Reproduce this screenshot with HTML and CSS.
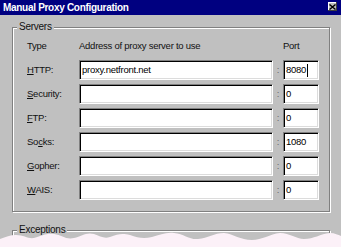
FILE: index.html
```html
<!DOCTYPE html>
<html lang="en">
<head>
  <meta charset="UTF-8">
  <title>Manual Proxy Configuration</title>
  <link rel="stylesheet" href="styles.css">
</head>
<body>
  <div class="window">
    <div class="titlebar">
      <span class="title">Manual Proxy Configuration</span>
      <span class="close">
        <svg width="7" height="6" viewBox="0 0 7 6"><path d="M0.5 0.5 L6.5 5.5 M6.5 0.5 L0.5 5.5" stroke="#000" stroke-width="1.4"/></svg>
      </span>
    </div>

    <fieldset class="group servers">
      <legend>Servers</legend>
      <div class="grid">
        <div class="head">Type</div>
        <div class="head">Address of proxy server to use</div>
        <div></div>
        <div class="head">Port</div>

        <div class="label"><u>H</u>TTP:</div>
        <div class="field">proxy.netfront.net</div>
        <div class="colon">:</div>
        <div class="field">8080<span class="caret"></span></div>

        <div class="label"><u>S</u>ecurity:</div>
        <div class="field"></div>
        <div class="colon">:</div>
        <div class="field">0</div>

        <div class="label"><u>F</u>TP:</div>
        <div class="field"></div>
        <div class="colon">:</div>
        <div class="field">0</div>

        <div class="label">So<u>c</u>ks:</div>
        <div class="field"></div>
        <div class="colon">:</div>
        <div class="field">1080</div>

        <div class="label"><u>G</u>opher:</div>
        <div class="field"></div>
        <div class="colon">:</div>
        <div class="field">0</div>

        <div class="label"><u>W</u>AIS:</div>
        <div class="field"></div>
        <div class="colon">:</div>
        <div class="field">0</div>
      </div>
    </fieldset>

    <fieldset class="group exceptions">
      <legend>Exceptions</legend>
    </fieldset>

    <!-- torn paper edge -->
    <svg class="torn" width="341" height="20" viewBox="0 0 341 20">
      <path d="M0 9 C6 7 10 5 16 5 C24 5 28 9 34 8 C42 6 46 3 54 4 C62 5 66 10 74 8 C82 6 86 2 94 4 C100 6 104 9 110 7 C118 4 122 3 130 5 C138 8 144 9 152 7 C160 5 166 2 174 3 C184 4 190 10 198 9 C208 8 214 3 224 3 C234 4 240 10 252 10 C262 10 270 4 280 3 C290 3 296 9 304 9 C314 9 320 4 330 3 C335 3 338 5 341 6 L341 20 L0 20 Z" fill="#fcf1f8"/>
    </svg>
  </div>
</body>
</html>
```

FILE: styles.css
```css
/* Reset Styles */
* {
  margin: 0;
  padding: 0;
  box-sizing: border-box;
}

body {
  font-family: 'Liberation Sans', Arial, sans-serif;
  font-size: 9.5px;
  letter-spacing: -0.25px;
  background-color: #c0c0c0;
  color: #111;
}

.window {
  position: relative;
  width: 341px;
  height: 247px;
  overflow: hidden;
  background-color: #c0c0c0;
}

.titlebar {
  height: 15px;
  background-color: #000080;
  color: white;
  display: flex;
  align-items: center;
  justify-content: space-between;
  padding: 0 4px 0 3px;
}

.title {
  font-size: 10px;
  font-weight: bold;
  letter-spacing: -0.3px;
}

.close {
  width: 9px;
  height: 9px;
  margin-top: -2px;
  background-color: #c0c0c0;
  box-shadow: inset -1px -1px #404040, inset 1px 1px #fff;
  display: flex;
  align-items: center;
  justify-content: center;
}

/* Group boxes */
.group {
  border: 1px solid #808080;
  box-shadow: inset 1px 1px #fff, 1px 1px #fff;
  margin-left: 12px;
  margin-right: 11px;
}

.group legend {
  margin-left: 4px;
  padding: 0 2px;
  line-height: 12px;
  height: 12px;
  font-size: 10px;
  background-color: #c0c0c0;
}

.servers {
  margin-top: 6px;
}

.exceptions {
  margin-top: 12px;
  height: 40px;
}

.grid {
  display: grid;
  grid-template-columns: 52px 194px 10px 36px;
  row-gap: 4px;
  padding: 7px 0 11px 14px;
}

.head {
  line-height: 12px;
  margin-bottom: 4px;
}

.label {
  line-height: 20px;
}

.colon {
  line-height: 20px;
  text-align: center;
  color: #666;
}

.field {
  height: 20px;
  background-color: #fff;
  border: 1px solid;
  border-color: #808080 #fff #fff #808080;
  box-shadow: inset 1px 1px #000, inset -1px -1px #dcdcdc;
  padding-left: 2px;
  line-height: 18px;
  color: #000;
  display: flex;
  align-items: center;
}

.caret {
  display: inline-block;
  width: 1px;
  height: 13px;
  margin-left: 1px;
  background-color: #000;
}

.torn {
  position: absolute;
  left: 0;
  top: 230px;
}
```
